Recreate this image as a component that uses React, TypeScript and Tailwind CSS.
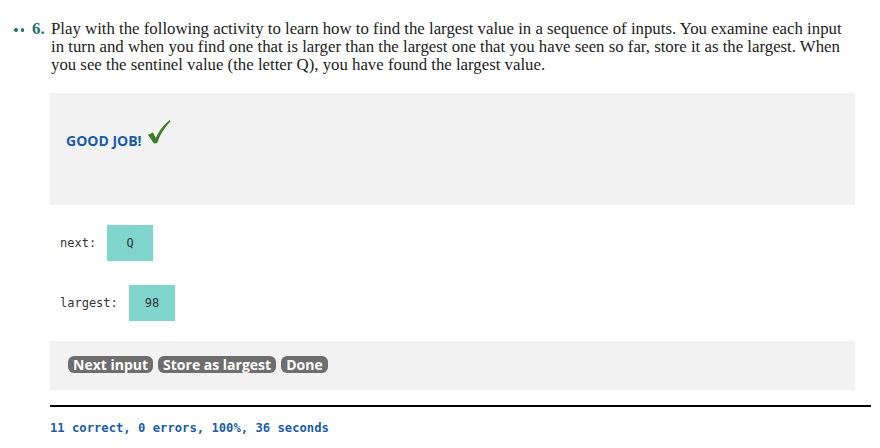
import React from "react";

export default function App() {
  return (
    <div className="w-[880px] h-[448px] bg-white relative overflow-hidden">
      <div className="flex pt-[20px] pl-[14px]">
        <div className="w-[37px] shrink-0 flex items-start h-[18px] text-[16.8px] leading-[18px] font-bold text-[#1b6f6a] whitespace-nowrap" style={{ fontFamily: '"Liberation Serif", serif' }}>
          <span className="w-[3.5px] h-[3.5px] rounded-full bg-[#1b6f6a] mt-[8px]"></span>
          <span className="w-[3.5px] h-[3.5px] rounded-full bg-[#1b6f6a] mt-[8px] ml-[3px]"></span>
          <span className="ml-[8px]">6.</span>
        </div>
        <p className="w-[800px] text-[16.8px] leading-[18px] text-[#222]" style={{ fontFamily: '"Liberation Serif", serif' }}>
          Play with the following activity to learn how to find the largest value in a sequence of inputs. You examine each input in turn and when you find one that is larger than the largest one that you have seen so far, store it as the largest. When you see the sentinel value (the letter Q), you have found the largest value.
        </p>
      </div>

      <div className="ml-[50px] w-[805px]">
        <div className="mt-[19px] h-[112px] bg-[#f2f2f2] pl-[16px] pt-[25px] flex items-start">
          <span className="mt-[12px] text-[14px] font-bold text-[#1a5ca8]" style={{ fontFamily: '"Open Sans", sans-serif' }}>GOOD JOB!</span>
          <svg width="24" height="28" viewBox="0 0 26 28" className="ml-[5px]">
            <path d="M1 17 L6.5 14.5 L9.5 20.5 C13 13 17.5 6.5 24.5 1 L25.5 2.5 C19 9 14.5 16 11 26 L7.5 26.5 Z" fill="#3b7d2a" />
          </svg>
        </div>

        <div className="mt-[20px] flex items-center h-[36px] pl-[10px] text-[12px] text-[#333]" style={{ fontFamily: '"DejaVu Sans Mono", monospace' }}>
          <span className="w-[47px]">next:</span>
          <div className="w-[46px] h-[36px] bg-[#80d5cd] flex items-center justify-center">Q</div>
        </div>
        <div className="mt-[24px] flex items-center h-[36px] pl-[10px] text-[12px] text-[#333]" style={{ fontFamily: '"DejaVu Sans Mono", monospace' }}>
          <span className="w-[69px]">largest:</span>
          <div className="w-[46px] h-[36px] bg-[#80d5cd] flex items-center justify-center">98</div>
        </div>

        <div className="mt-[20px] h-[49px] bg-[#f2f2f2] pl-[18px] pb-[2px] flex items-center gap-[5px]">
          {["Next input", "Store as largest", "Done"].map((t) => (
            <span key={t} className="h-[17px] px-[5px] rounded-[6px] bg-[#6e6e6e] text-white text-[14px] font-bold leading-[17px]" style={{ fontFamily: '"Open Sans", sans-serif' }}>{t}</span>
          ))}
        </div>
      </div>

      <div className="ml-[50px] w-[821px] mt-[15px] border-t-[2px] border-black"></div>
      <div className="ml-[50px] mt-[12px] text-[12.2px] font-bold text-[#1a5ca8]" style={{ fontFamily: '"DejaVu Sans Mono", monospace' }}>
        11 correct, 0 errors, 100%, 36 seconds
      </div>
    </div>
  );
}
